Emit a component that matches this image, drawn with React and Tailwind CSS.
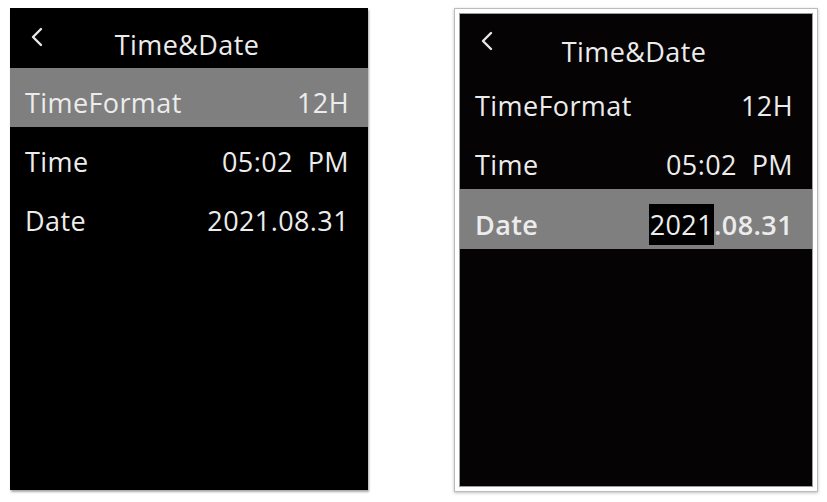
import React from 'react';

const font = { fontFamily: '"Open Sans", "Noto Sans", sans-serif' };

// Back chevron drawn as stroke
const Chevron = () => (
  <svg width="14" height="20" viewBox="0 0 14 20" className="text-[#e8e8e8]">
    <path d="M11 2 L3 10 L11 18" fill="none" stroke="currentColor" strokeWidth="2.4" strokeLinecap="round" strokeLinejoin="round" />
  </svg>
);

const Row = ({ label, value, active, bold, children, h = 'h-[59px]' }) => (
  <div
    className={`${h} flex items-center justify-between pl-[15px] pr-[19px] pt-[12px] ${active ? 'bg-[#7f7f7f]' : ''}`}
  >
    <span className={`${bold ? 'font-semibold' : ''}`}>{label}</span>
    <span className={`${bold ? 'font-semibold' : ''} whitespace-pre`}>{children || value}</span>
  </div>
);

const LeftScreen = () => (
  <div className="w-[358px] h-[482px] bg-black text-[#ececec] text-[27px] tracking-[0.4px] shadow-[1px_2px_2px_rgba(0,0,0,0.35)]" style={font}>
    <div className="h-[60px] relative flex items-center justify-center pt-[15px]">
      <div className="absolute left-[20px] top-[19px]"><Chevron /></div>
      <span className="pr-[4px]">Time&amp;Date</span>
    </div>
    <Row label="TimeFormat" value="12H" active />
    <Row label="Time" value="05:02  PM" />
    <Row label="Date" value="2021.08.31" />
  </div>
);

const RightScreen = () => (
  <div className="w-[364px] h-[484px] bg-white border border-[#bcbcbc] p-[4px] shadow-[0_1px_3px_rgba(0,0,0,0.25)]">
    <div className="h-full bg-[#050303] border border-[#9c9c9c] text-[#ececec] text-[27px] tracking-[0.4px]" style={font}>
      <div className="h-[57px] relative flex items-center justify-center pt-[19px]">
        <div className="absolute left-[20px] top-[17px]"><Chevron /></div>
        <span className="pr-[4px]">Time&amp;Date</span>
      </div>
      <Row label="TimeFormat" value="12H" />
      <Row label="Time" value="05:02  PM" />
      <Row label="Date" active bold h="h-[60px]">
        <span className="bg-black font-normal px-[1px] py-[2px]">2021</span>.08.31
      </Row>
    </div>
  </div>
);

export default function App() {
  return (
    <div className="w-[827px] h-[502px] bg-white flex items-start pt-[8px] pl-[10px] gap-[86px]">
      <LeftScreen />
      <RightScreen />
    </div>
  );
}
